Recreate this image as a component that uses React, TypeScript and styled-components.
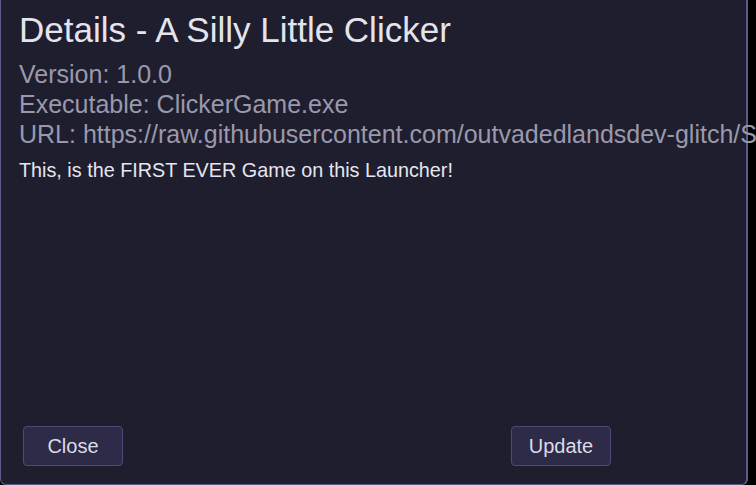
import React from "react";
import styled, { createGlobalStyle } from "styled-components";

const Global = createGlobalStyle`
  html, body { margin: 0; padding: 0; background: #000; }
  body { font-family: "Liberation Sans", Arial, sans-serif; overflow: hidden; }
`;

const Dialog = styled.div`
  box-sizing: border-box;
  width: 748px;
  height: 485px;
  background: #1f1e2f;
  border: 1px solid #5d5b8e;
  border-top: none;
  border-right-width: 2px;
  border-radius: 0 0 6px 6px;
  display: flex;
  flex-direction: column;
  padding: 0 0 18px 18px;
  overflow: visible;
`;

const Title = styled.h1`
  margin: 8px 0 0 0;
  font-size: 35px;
  font-weight: 400;
  line-height: 44px;
  color: #e4e4ec;
  white-space: nowrap;
`;

const InfoList = styled.div`
  display: flex;
  flex-direction: column;
  margin-top: 7px;
`;

const InfoLine = styled.div`
  font-size: 25px;
  line-height: 30px;
  color: #9a99ab;
  white-space: nowrap;
`;

const Description = styled.p`
  margin: 9px 0 0 0;
  font-size: 19.8px;
  line-height: 24px;
  color: #e6e6ee;
  white-space: nowrap;
`;

const Spacer = styled.div`
  flex: 1;
`;

const Actions = styled.div`
  display: grid;
  grid-template-columns: 488px auto;
  padding-left: 4px;
  justify-items: start;
`;

const Button = styled.button`
  box-sizing: border-box;
  width: 100px;
  height: 40px;
  padding: 0;
  background: #2d2b47;
  border: 1px solid #4d4b75;
  border-radius: 4px;
  color: #dcdce6;
  font-family: "Liberation Sans", Arial, sans-serif;
  font-size: 20px;
  cursor: pointer;
`;

export default function App() {
  return (
    <>
      <Global />
      <Dialog>
        <Title>Details - A Silly Little Clicker</Title>
        <InfoList>
          <InfoLine>Version: 1.0.0</InfoLine>
          <InfoLine>Executable: ClickerGame.exe</InfoLine>
          <InfoLine>URL: https://raw.githubusercontent.com/outvadedlandsdev-glitch/SillyLauncher/main/games.json</InfoLine>
        </InfoList>
        <Description>This, is the FIRST EVER Game on this Launcher!</Description>
        <Spacer />
        <Actions>
          <Button>Close</Button>
          <Button>Update</Button>
        </Actions>
      </Dialog>
    </>
  );
}
